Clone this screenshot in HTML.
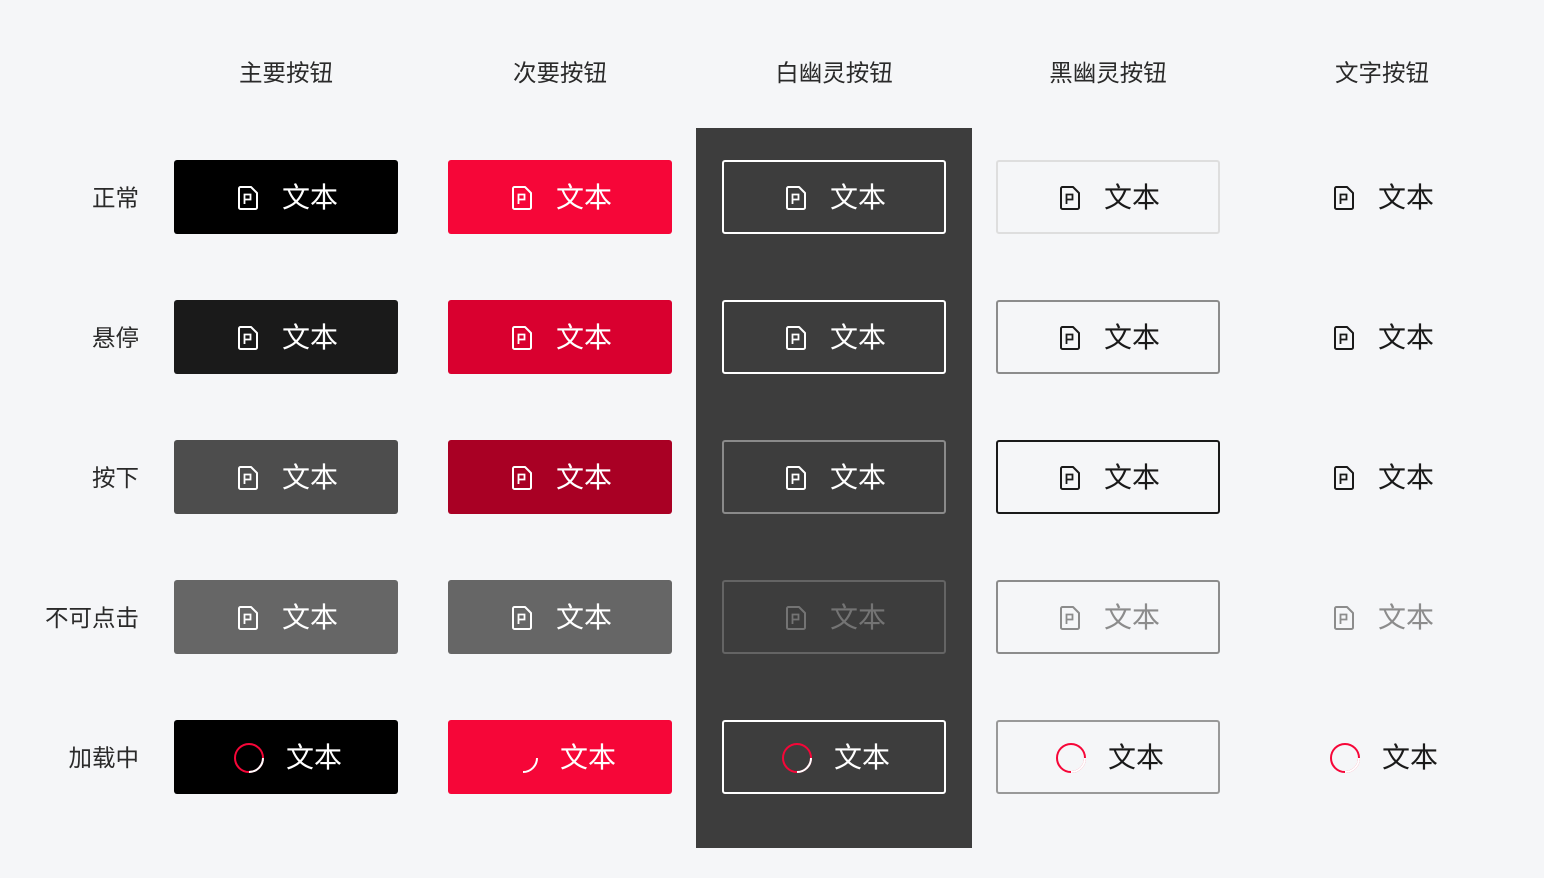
<!DOCTYPE html>
<html><head><meta charset="utf-8"><style>
body{margin:0;width:1544px;height:878px;background:#f5f6f8;position:relative;overflow:hidden;font-family:"Liberation Sans","Noto Sans CJK SC",sans-serif}
.h{position:absolute;top:56px;width:274px;text-align:center;font-size:23.5px;color:#2a2a2a;line-height:34px}
.l{position:absolute;right:1405px;font-size:23.5px;color:#2a2a2a;line-height:34px;white-space:nowrap}
.panel{position:absolute;left:696px;top:128px;width:276px;height:720px;background:#3d3d3d}
.b{position:absolute;width:224px;height:74px;box-sizing:border-box;border-radius:3px;display:flex;align-items:center;justify-content:center;font-size:28px;color:#fff;padding-left:4px;padding-top:2px}
.b svg.i{margin-right:24px}
.b svg.s{margin-right:22px}
.b span{line-height:70px}
</style></head><body>
<svg width="0" height="0" style="position:absolute"><defs>
<symbol id="doc" viewBox="0 0 20 24"><path d="M2.5 1H13L19 7V21.5A1.5 1.5 0 0 1 17.5 23H2.5A1.5 1.5 0 0 1 1 21.5V2.5A1.5 1.5 0 0 1 2.5 1Z" fill="none" stroke="currentColor" stroke-width="2" stroke-linejoin="round"/><path d="M6.5 18V8.5H12.5V13.5H6.5" fill="none" stroke="currentColor" stroke-width="1.8"/></symbol>
</defs></svg>
<div class="h" style="left:149px">主要按钮</div>
<div class="h" style="left:423px">次要按钮</div>
<div class="h" style="left:697px">白幽灵按钮</div>
<div class="h" style="left:971px">黑幽灵按钮</div>
<div class="h" style="left:1245px">文字按钮</div>
<div class="l" style="top:181px">正常</div>
<div class="l" style="top:321px">悬停</div>
<div class="l" style="top:461px">按下</div>
<div class="l" style="top:601px">不可点击</div>
<div class="l" style="top:741px">加载中</div>
<div class="panel"></div>

<div class="b" style="left:174px;top:160px;background:#000"><svg class="i" width="20" height="24"><use href="#doc"/></svg><span>文本</span></div>
<div class="b" style="left:448px;top:160px;background:#f60638"><svg class="i" width="20" height="24"><use href="#doc"/></svg><span>文本</span></div>
<div class="b" style="left:722px;top:160px;border:2px solid #fff"><svg class="i" width="20" height="24"><use href="#doc"/></svg><span>文本</span></div>
<div class="b" style="left:996px;top:160px;border:2px solid #dedede;color:#1a1a1a"><svg class="i" width="20" height="24"><use href="#doc"/></svg><span>文本</span></div>
<div class="b" style="left:1270px;top:160px;color:#1a1a1a"><svg class="i" width="20" height="24"><use href="#doc"/></svg><span>文本</span></div>

<div class="b" style="left:174px;top:300px;background:#1a1a1a"><svg class="i" width="20" height="24"><use href="#doc"/></svg><span>文本</span></div>
<div class="b" style="left:448px;top:300px;background:#d9002f"><svg class="i" width="20" height="24"><use href="#doc"/></svg><span>文本</span></div>
<div class="b" style="left:722px;top:300px;border:2px solid #fff"><svg class="i" width="20" height="24"><use href="#doc"/></svg><span>文本</span></div>
<div class="b" style="left:996px;top:300px;border:2px solid #8c8c8c;color:#1a1a1a"><svg class="i" width="20" height="24"><use href="#doc"/></svg><span>文本</span></div>
<div class="b" style="left:1270px;top:300px;color:#1a1a1a"><svg class="i" width="20" height="24"><use href="#doc"/></svg><span>文本</span></div>

<div class="b" style="left:174px;top:440px;background:#4d4d4d"><svg class="i" width="20" height="24"><use href="#doc"/></svg><span>文本</span></div>
<div class="b" style="left:448px;top:440px;background:#a90024"><svg class="i" width="20" height="24"><use href="#doc"/></svg><span>文本</span></div>
<div class="b" style="left:722px;top:440px;border:2px solid #8a8a8a"><svg class="i" width="20" height="24"><use href="#doc"/></svg><span>文本</span></div>
<div class="b" style="left:996px;top:440px;border:2px solid #1a1a1a;color:#1a1a1a"><svg class="i" width="20" height="24"><use href="#doc"/></svg><span>文本</span></div>
<div class="b" style="left:1270px;top:440px;color:#1a1a1a"><svg class="i" width="20" height="24"><use href="#doc"/></svg><span>文本</span></div>

<div class="b" style="left:174px;top:580px;background:#666"><svg class="i" width="20" height="24"><use href="#doc"/></svg><span>文本</span></div>
<div class="b" style="left:448px;top:580px;background:#666"><svg class="i" width="20" height="24"><use href="#doc"/></svg><span>文本</span></div>
<div class="b" style="left:722px;top:580px;border:2px solid #646464;color:#747474"><svg class="i" width="20" height="24"><use href="#doc"/></svg><span>文本</span></div>
<div class="b" style="left:996px;top:580px;border:2px solid #8c8c8c;color:#8c8c8c"><svg class="i" width="20" height="24"><use href="#doc"/></svg><span>文本</span></div>
<div class="b" style="left:1270px;top:580px;color:#8c8c8c"><svg class="i" width="20" height="24"><use href="#doc"/></svg><span>文本</span></div>

<div class="b" style="left:174px;top:720px;background:#000"><svg class="s" width="30" height="30"><circle cx="15" cy="15" r="14" fill="none" stroke="#f60638" stroke-width="2"/><path d="M29 15A14 14 0 0 1 15 29" fill="none" stroke="#fff" stroke-width="2"/></svg><span>文本</span></div>
<div class="b" style="left:448px;top:720px;background:#f60638"><svg class="s" width="30" height="30"><path d="M29 15A14 14 0 0 1 15 29" fill="none" stroke="#fff" stroke-width="2"/></svg><span>文本</span></div>
<div class="b" style="left:722px;top:720px;border:2px solid #fff"><svg class="s" width="30" height="30"><circle cx="15" cy="15" r="14" fill="none" stroke="#f60638" stroke-width="2"/><path d="M29 15A14 14 0 0 1 15 29" fill="none" stroke="#fff" stroke-width="2"/></svg><span>文本</span></div>
<div class="b" style="left:996px;top:720px;border:2px solid #999;color:#1a1a1a"><svg class="s" width="30" height="30"><circle cx="15" cy="15" r="14" fill="none" stroke="#f60638" stroke-width="2"/><path d="M29 15A14 14 0 0 1 15 29" fill="none" stroke="#fff" stroke-width="2"/></svg><span>文本</span></div>
<div class="b" style="left:1270px;top:720px;color:#1a1a1a"><svg class="s" width="30" height="30"><circle cx="15" cy="15" r="14" fill="none" stroke="#f60638" stroke-width="2"/><path d="M29 15A14 14 0 0 1 15 29" fill="none" stroke="#fff" stroke-width="2"/></svg><span>文本</span></div>
</body></html>
